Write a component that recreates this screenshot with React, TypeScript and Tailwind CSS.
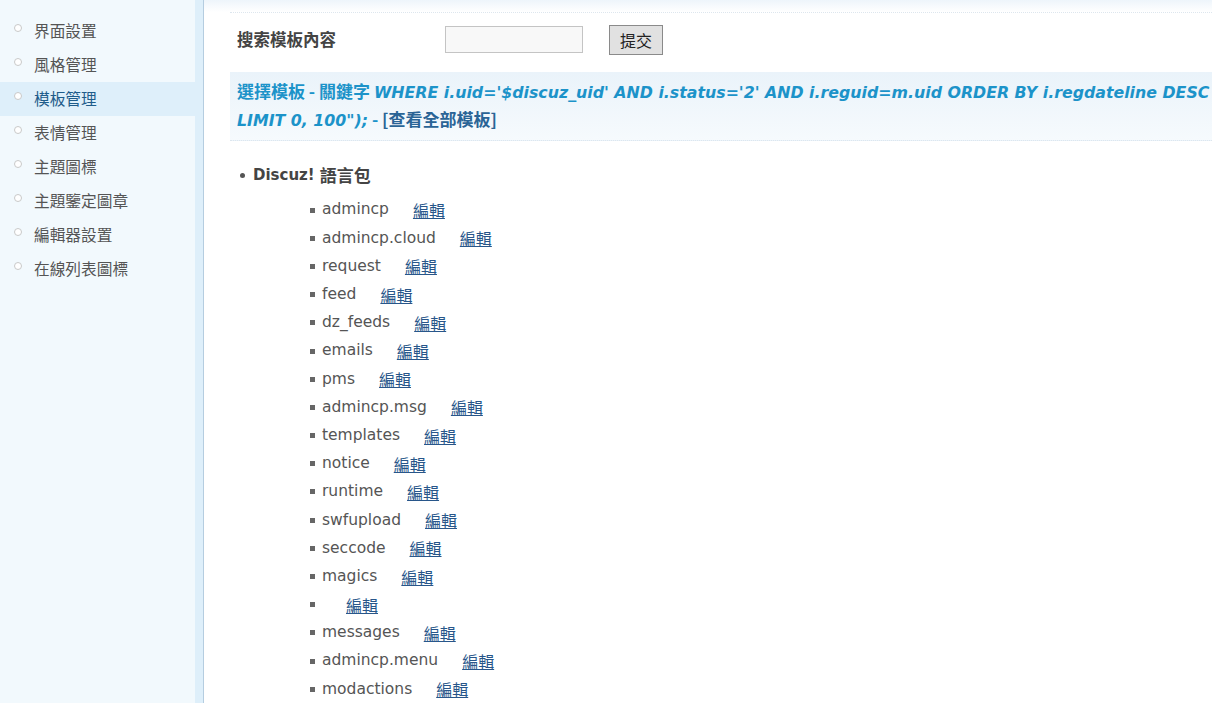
import React from 'react'

const menu = ['界面設置', '風格管理', '模板管理', '表情管理', '主題圖標', '主題鑒定圖章', '編輯器設置', '在線列表圖標']

const packs = [
  'admincp',
  'admincp.cloud',
  'request',
  'feed',
  'dz_feeds',
  'emails',
  'pms',
  'admincp.msg',
  'templates',
  'notice',
  'runtime',
  'swfupload',
  'seccode',
  'magics',
  '',
  'messages',
  'admincp.menu',
  'modactions',
]

const cjk = { fontFamily: '"Noto Sans CJK TC", "Noto Sans", sans-serif' }
const latin = { fontFamily: '"DejaVu Sans", sans-serif' }

function Sidebar() {
  return (
    <div className="flex w-[204px] shrink-0 bg-[#f2f9fd]">
      <div className="w-[195px] pt-[14px]">
        {menu.map(item => (
          <div
            key={item}
            className={`flex h-[34px] items-center pl-[14px] text-[15.7px] ${
              item === '模板管理' ? 'bg-[#deeffa] text-[#1e5c8a]' : 'text-[#555]'
            }`}
            style={cjk}
          >
            <span className="mr-[12px] mb-[6px] h-[8px] w-[8px] rounded-full border border-[#c9c9c9] bg-white" />
            {item}
          </div>
        ))}
      </div>
      <div className="w-[8px] bg-[#deeffa]" />
      <div className="w-px bg-[#b5cde0]" />
    </div>
  )
}

export default function App() {
  return (
    <div className="flex h-[703px] w-[1212px] overflow-hidden bg-white">
      <Sidebar />
      <div className="min-w-0 flex-1 bg-gradient-to-b from-[#eef5fb] to-white to-[12px]">
        <div className="ml-[26px] mt-[12px] border-t border-dotted border-[#dde6ee]" />
        <div className="ml-[33px] flex h-[53px] items-center">
          <span className="w-[208px] text-[16.5px] font-bold text-[#444]" style={cjk}>
            搜索模板內容
          </span>
          <input className="h-[27px] w-[138px] border border-[#c4c4c4] bg-[#f8f8f8]" />
          <button
            className="ml-[26px] h-[30px] w-[54px] border border-[#8a8a8a] bg-[#e1e1e1] text-[16px] text-[#222]"
            style={cjk}
          >
            提交
          </button>
        </div>
        <div className="ml-[26px] mt-[6px] border-b border-dotted border-[#dde6ee] bg-gradient-to-b from-[#eaf3fa] to-[#f6fafd] pt-[5px] pb-[7px] pl-[7px] text-[17px] font-bold text-[#1c93c9]">
          <div className="h-[28px] whitespace-nowrap leading-[28px]">
            <span style={cjk}>選擇模板 - 關鍵字 </span>
            <span className="italic text-[15.8px]" style={latin}>
              WHERE i.uid='$discuz_uid' AND i.status='2' AND i.reguid=m.uid ORDER BY i.regdateline DESC
            </span>
          </div>
          <div className="h-[28px] whitespace-nowrap leading-[28px]">
            <span className="italic text-[15.8px]" style={latin}>
              LIMIT 0, 100");
            </span>
            <span style={cjk}> - </span>
            <span className="text-[#2a6496]" style={cjk}>[查看全部模板]</span>
          </div>
        </div>
        <div className="ml-[36px] mt-[23px]">
          <div className="flex h-[22px] items-center text-[15px] font-bold text-[#444]">
            <span className="mr-[8px] h-[5px] w-[5px] rounded-full bg-[#555]" />
            <span style={latin}>Discuz!</span>
            <span className="ml-[5px] text-[17px]" style={cjk}>
              語言包
            </span>
          </div>
          <div className="ml-[70px] mt-[10px]">
            {packs.map((p, i) => (
              <div key={i} className="flex h-[28.2px] items-center text-[15.5px] text-[#555]">
                <span className="mr-[7px] h-[5px] w-[5px] bg-[#666]" />
                <span style={latin}>{p}</span>
                <a
                  href="#"
                  className="ml-[24px] text-[16px] text-[#28568a] underline decoration-[#28568a]"
                  style={cjk}
                >
                  編輯
                </a>
              </div>
            ))}
          </div>
        </div>
      </div>
    </div>
  )
}
